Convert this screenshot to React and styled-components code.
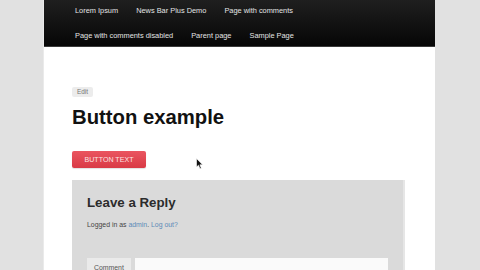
import React from "react";
import styled, { createGlobalStyle } from "styled-components";

const Global = createGlobalStyle`
  html, body { margin: 0; padding: 0; }
  body {
    background: #e1e1e1;
    font-family: "Liberation Sans", Arial, sans-serif;
    width: 480px;
    height: 270px;
    overflow: hidden;
  }
`;

const Page = styled.div`
  position: relative;
  width: 392px;
  height: 270px;
  margin-left: 43px;
  background: #ffffff;
  border-left: 1px solid #eaeaea;
  box-sizing: border-box;
`;

const Header = styled.nav`
  height: 47px;
  background: linear-gradient(#1f1f1f, #060606);
  padding: 0 0 0 31px;
  box-sizing: border-box;
  display: flex;
  flex-direction: column;
  gap: 5px;
  border-bottom: 1px solid #3a3a3a;
`;

const NavRow = styled.ul`
  list-style: none;
  margin: 0;
  padding: 0;
  height: 20px;
  display: flex;
  align-items: center;
  gap: 18px;
`;

const NavItem = styled.li`
  color: #e4e4e4;
  font-size: 7.4px;
  white-space: nowrap;
`;

const Content = styled.main`
  padding: 40px 29px 0 28px;
  display: flex;
  flex-direction: column;
  align-items: flex-start;
`;

const EditBadge = styled.span`
  background: #ececec;
  color: #777;
  font-size: 6.4px;
  padding: 2px 5px;
  border-radius: 2px;
  line-height: 6px;
`;

const Title = styled.h1`
  margin: 8px 0 0;
  font-size: 20.3px;
  font-weight: bold;
  color: #111;
  line-height: 24px;
`;

const RedButton = styled.button`
  margin-top: 22px;
  width: 74px;
  height: 17px;
  background: linear-gradient(#ea5560, #d93a45);
  color: #fbe3e3;
  border: none;
  border-radius: 2px;
  font-family: "Liberation Sans", Arial, sans-serif;
  font-size: 7.1px;
  text-transform: uppercase;
  padding: 0;
  box-shadow: 0 1px 1px rgba(0, 0, 0, 0.12);
`;

const Cursor = styled.svg`
  position: absolute;
  left: 152px;
  top: 158px;
`;

const Comments = styled.section`
  margin-top: 12px;
  width: 333px;
  height: 100px;
  background: #dadada;
  border-right: 2px solid #e6e6e6;
  box-sizing: border-box;
  padding: 14px 15px 0;
  display: flex;
  flex-direction: column;
`;

const ReplyTitle = styled.h3`
  margin: 0;
  font-size: 13.3px;
  line-height: 17px;
  font-weight: bold;
  color: #2c2c2c;
`;

const Logged = styled.p`
  margin: 9px 0 0;
  font-size: 6.9px;
  color: #444;
  line-height: 10px;
`;

const Link = styled.a`
  color: #5a8ab8;
  text-decoration: none;
`;

const FieldRow = styled.div`
  margin-top: 28px;
  display: flex;
  gap: 4px;
  height: 20px;
`;

const FieldLabel = styled.label`
  background: #eaeaea;
  color: #555;
  font-size: 6.9px;
  width: 44px;
  padding: 6px 0 0 7px;
  box-sizing: border-box;
`;

const FieldInput = styled.div`
  flex: 1;
  background: #fafafa;
`;

export default function App() {
  return (
    <>
      <Global />
      <Page>
        <Header>
          <NavRow>
            <NavItem>Lorem Ipsum</NavItem>
            <NavItem>News Bar Plus Demo</NavItem>
            <NavItem>Page with comments</NavItem>
          </NavRow>
          <NavRow>
            <NavItem>Page with comments disabled</NavItem>
            <NavItem>Parent page</NavItem>
            <NavItem>Sample Page</NavItem>
          </NavRow>
        </Header>
        <Content>
          <EditBadge>Edit</EditBadge>
          <Title>Button example</Title>
          <RedButton>Button Text</RedButton>
          <Comments>
            <ReplyTitle>Leave a Reply</ReplyTitle>
            <Logged>
              Logged in as <Link>admin</Link>. <Link>Log out?</Link>
            </Logged>
            <FieldRow>
              <FieldLabel>Comment</FieldLabel>
              <FieldInput />
            </FieldRow>
          </Comments>
        </Content>
        <Cursor width="8" height="12" viewBox="0 0 8 12">
          <path d="M0.5 0.5 L0.5 9 L2.5 7.2 L4 10.8 L5.3 10.2 L3.9 6.8 L6.6 6.8 Z" fill="#111" stroke="#fff" strokeWidth="0.6" />
        </Cursor>
      </Page>
    </>
  );
}
